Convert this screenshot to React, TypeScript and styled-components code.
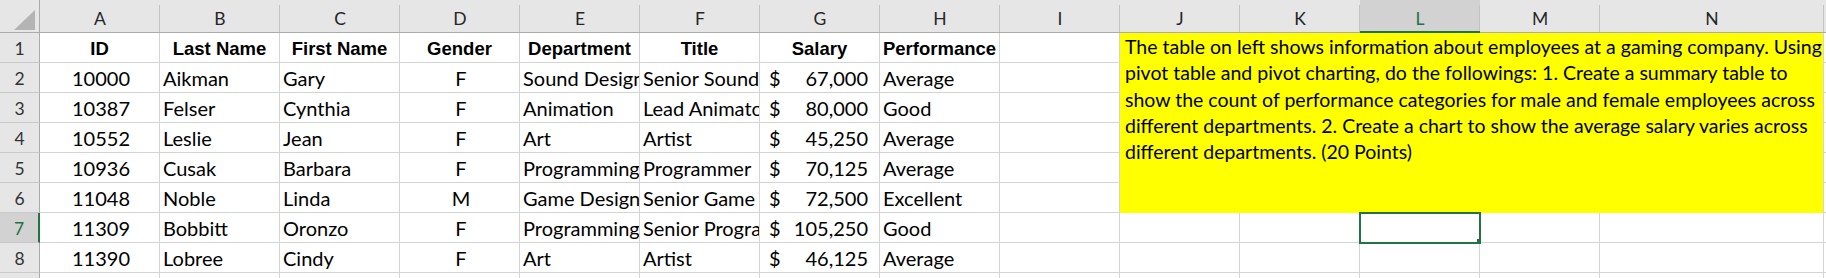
import * as React from 'react';
import styled, { createGlobalStyle } from 'styled-components';

const GlobalStyle = createGlobalStyle`
  html, body {
    margin: 0;
    padding: 0;
    background: #ffffff;
  }
  body {
    font-family: Lato, "Liberation Sans", sans-serif;
  }
`;

const GRID = '#d4d4d4';
const HEAD_BG = '#e6e6e6';
const HEAD_LINE = '#ababab';
const GREEN = '#217346';

const Sheet = styled.div`
  display: grid;
  grid-template-columns: 40px repeat(13, 120px) 224px 1fr;
  grid-template-rows: 33px repeat(9, 30px);
  width: 1826px;
  height: 278px;
  overflow: hidden;
  background: #ffffff;
`;

const Corner = styled.div`
  background: ${HEAD_BG};
  border-right: 1px solid ${HEAD_LINE};
  border-bottom: 1px solid ${HEAD_LINE};
  display: flex;
  align-items: flex-end;
  justify-content: flex-end;
  padding: 0 3px 2px 0;
`;

const ColHeader = styled.div<{ $active?: boolean }>`
  background-color: ${p => (p.$active ? '#d2d2d2' : HEAD_BG)};
  background-image: linear-gradient(#c3c3c3, #c3c3c3);
  background-size: 1px calc(100% - 5px);
  background-position: right bottom;
  background-repeat: no-repeat;
  border-bottom: ${p => (p.$active ? `2px solid ${GREEN}` : `1px solid ${HEAD_LINE}`)};
  display: flex;
  align-items: center;
  justify-content: center;
  padding-top: ${p => (p.$active ? '6px' : '5px')};
  font-size: 17.5px;
  color: ${p => (p.$active ? GREEN : '#262626')};
`;

const RowHeader = styled.div<{ $active?: boolean }>`
  background: ${p => (p.$active ? '#d2d2d2' : HEAD_BG)};
  border-right: ${p => (p.$active ? `2px solid ${GREEN}` : `1px solid ${HEAD_LINE}`)};
  border-bottom: 1px solid #c8c8c8;
  display: flex;
  align-items: center;
  justify-content: center;
  padding-top: 2px;
  font-size: 17.5px;
  color: ${p => (p.$active ? GREEN : '#333333')};
`;

const Cell = styled.div<{ $align?: 'left' | 'center'; $bold?: boolean; $last?: boolean }>`
  border-right: ${p => (p.$last ? 'none' : `1px solid ${GRID}`)};
  border-bottom: 1px solid ${GRID};
  display: flex;
  align-items: center;
  justify-content: ${p => (p.$align === 'center' ? 'center' : 'flex-start')};
  padding: ${p => (p.$bold ? '3px 0 0 0' : '1px 0 0 3px')};
  overflow: hidden;
  white-space: nowrap;
  line-height: 1;
  font-family: ${p => (p.$bold ? '"Liberation Sans", Arial, sans-serif' : 'Lato, "Liberation Sans", sans-serif')};
  font-weight: ${p => (p.$bold ? 700 : 400)};
  font-size: ${p => (p.$bold ? '18.5px' : '20px')};
  color: #000000;
`;

const MoneyCell = styled(Cell)`
  justify-content: space-between;
  padding: 1px 11px 0 9px;
`;

const Selected = styled(Cell)`
  position: relative;
  z-index: 1;
  outline: 2px solid ${GREEN};
  outline-offset: -1px;
`;

const Handle = styled.span`
  position: absolute;
  right: -4px;
  bottom: -3px;
  width: 5px;
  height: 5px;
  background: ${GREEN};
  border: 1px solid #ffffff;
`;

const Note = styled.div`
  grid-column: 11 / span 5;
  grid-row: 2 / span 6;
  background: #ffff00;
  border-right: 1px solid ${GRID};
  padding: 1px 0 0 5px;
  overflow: hidden;
  font-size: 19.5px;
  line-height: 26.3px;
  color: #000000;
`;

const NoteLine = styled.div`
  white-space: nowrap;
`;

const columns = ['A', 'B', 'C', 'D', 'E', 'F', 'G', 'H', 'I', 'J', 'K', 'L', 'M', 'N', ''];

const employees = [
  { id: '10000', last: 'Aikman', first: 'Gary', gender: 'F', dept: 'Sound Design', title: 'Senior Sound Designer', salary: '67,000', perf: 'Average' },
  { id: '10387', last: 'Felser', first: 'Cynthia', gender: 'F', dept: 'Animation', title: 'Lead Animator', salary: '80,000', perf: 'Good' },
  { id: '10552', last: 'Leslie', first: 'Jean', gender: 'F', dept: 'Art', title: 'Artist', salary: '45,250', perf: 'Average' },
  { id: '10936', last: 'Cusak', first: 'Barbara', gender: 'F', dept: 'Programming', title: 'Programmer', salary: '70,125', perf: 'Average' },
  { id: '11048', last: 'Noble', first: 'Linda', gender: 'M', dept: 'Game Design', title: 'Senior Game Designer', salary: '72,500', perf: 'Excellent' },
  { id: '11309', last: 'Bobbitt', first: 'Oronzo', gender: 'F', dept: 'Programming', title: 'Senior Programmer', salary: '105,250', perf: 'Good' },
  { id: '11390', last: 'Lobree', first: 'Cindy', gender: 'F', dept: 'Art', title: 'Artist', salary: '46,125', perf: 'Average' },
];

const noteLines = [
  'The table on left shows information about employees at a gaming company. Using',
  'pivot table and pivot charting, do the followings: 1. Create a summary table to',
  'show the count of performance categories for male and female employees across',
  'different departments. 2. Create a chart to show the average salary varies across',
  'different departments. (20 Points)',
];

const headers = ['ID', 'Last Name', 'First Name', 'Gender', 'Department', 'Title', 'Salary', 'Performance'];

export default function App() {
  const rows = [];
  for (let r = 1; r <= 9; r++) {
    const cells = [];
    cells.push(
      <RowHeader key={`h${r}`} $active={r === 7}>
        {r}
      </RowHeader>,
    );
    if (r === 1) {
      headers.forEach(h => (
        cells.push(
          <Cell key={h} $align="center" $bold>
            {h}
          </Cell>,
        )
      ));
    } else if (r <= 8) {
      const e = employees[r - 2];
      cells.push(<Cell key="a" $align="center">{e.id}</Cell>);
      cells.push(<Cell key="b">{e.last}</Cell>);
      cells.push(<Cell key="c">{e.first}</Cell>);
      cells.push(<Cell key="d" $align="center">{e.gender}</Cell>);
      cells.push(<Cell key="e">{e.dept}</Cell>);
      cells.push(<Cell key="f">{e.title}</Cell>);
      cells.push(
        <MoneyCell key="g">
          <span>$</span>
          <span>{e.salary}</span>
        </MoneyCell>,
      );
      cells.push(<Cell key="h">{e.perf}</Cell>);
    } else {
      for (let c = 0; c < 8; c++) cells.push(<Cell key={`e${c}`} />);
    }
    // column I
    cells.push(<Cell key="i" />);
    // J..N only below the merged note
    if (r > 6) {
      cells.push(<Cell key="j" />);
      cells.push(<Cell key="k" />);
      cells.push(
        r === 7 ? (
          <Selected key="l">
            <Handle />
          </Selected>
        ) : (
          <Cell key="l" />
        ),
      );
      cells.push(<Cell key="m" />);
      cells.push(<Cell key="n" />);
    }
    cells.push(<Cell key="o" $last />);
    rows.push(<React.Fragment key={r}>{cells}</React.Fragment>);
  }

  return (
    <>
      <GlobalStyle />
      <Sheet>
        <Corner>
          <svg width="22" height="20" viewBox="0 0 22 20">
            <polygon points="21,0 21,20 0,20" fill="#b4b4b4" />
          </svg>
        </Corner>
        {columns.map(c => (
          <ColHeader key={c || 'O'} $active={c === 'L'}>
            {c}
          </ColHeader>
        ))}
        <Note>
          {noteLines.map(line => (
            <NoteLine key={line}>{line}</NoteLine>
          ))}
        </Note>
        {rows}
      </Sheet>
    </>
  );
}
